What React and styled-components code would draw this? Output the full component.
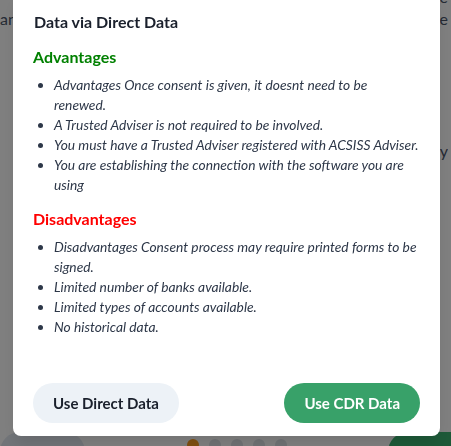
import React from 'react'
import styled, { createGlobalStyle } from 'styled-components'

const advantages = [
	'Advantages Once consent is given, it doesnt need to be renewed.',
	'A Trusted Adviser is not required to be involved.',
	'You must have a Trusted Adviser registered with ACSISS Adviser.',
	'You are establishing the connection with the software you are using',
]

const disadvantages = [
	'Disadvantages Consent process may require printed forms to be signed.',
	'Limited number of banks available.',
	'Limited types of accounts available.',
	'No historical data.',
]

function App() {
	return (
		<>
			<GlobalStyle />
			<StyledPage>
				<StyledBackground>
					<StyledBgLine $top={-14}>Please select how you would like to share your data here</StyledBgLine>
					<StyledBgLine>and the bank account details will be sent to the software we use</StyledBgLine>
					<StyledBgLine $top={110}>you can change this later from the settings page of your copy</StyledBgLine>
				</StyledBackground>
				<StyledPageFooter>
					<StyledGhostButton>Cancel</StyledGhostButton>
					<StyledDots>
						<StyledDot $active />
						<StyledDot />
						<StyledDot />
						<StyledDot />
						<StyledDot />
					</StyledDots>
					<StyledNextButton>Next</StyledNextButton>
				</StyledPageFooter>
			</StyledPage>

			<StyledOverlay>
				<StyledModal>
					<StyledTitle>Data via Direct Data</StyledTitle>
					<StyledSectionTitle color={'#008000'}>Advantages</StyledSectionTitle>
					<StyledList>
						{advantages.map((item) => (
							<li key={item}>{item}</li>
						))}
					</StyledList>
					<StyledSectionTitle color={'#ff0000'}>Disadvantages</StyledSectionTitle>
					<StyledList>
						{disadvantages.map((item) => (
							<li key={item}>{item}</li>
						))}
					</StyledList>
					<StyledModalFooter>
						<StyledButton $bg={'#edf2f7'} $fg={'#1a202c'}>
							Use Direct Data
						</StyledButton>
						<StyledButton $bg={'#38a169'} $fg={'#ffffff'}>
							Use CDR Data
						</StyledButton>
					</StyledModalFooter>
				</StyledModal>
			</StyledOverlay>
		</>
	)
}

const GlobalStyle = createGlobalStyle`
	html, body {
		margin: 0;
		padding: 0;
		overflow: hidden;
	}
	body {
		font-family: Lato, 'Liberation Sans', sans-serif;
		background: #ffffff;
		color: #1a202c;
	}
`
const StyledPage = styled.div`
	width: 451px;
	height: 472px;
	display: flex;
	flex-direction: column;
`
const StyledBackground = styled.div`
	height: 432px;
	padding-right: 3px;
	text-align: right;
	font-size: 16px;
	line-height: 22px;
	color: #4a5568;
`
const StyledBgLine = styled.p`
	margin: ${(props) => props.$top || 0}px 0 0 0;
	white-space: nowrap;
	overflow: hidden;
	direction: rtl;
`
const StyledPageFooter = styled.div`
	display: flex;
	justify-content: space-between;
	align-items: flex-start;
`
const StyledGhostButton = styled.button`
	width: 85px;
	height: 40px;
	padding: 0 0 0 21px;
	text-align: left;
	border: none;
	border-radius: 20px;
	background: #e2e8f0;
	color: #1a202c;
	font-family: Lato, sans-serif;
	font-size: 16px;
	font-weight: 700;
`
const StyledDots = styled.div`
	display: flex;
	gap: 10px;
	margin-top: 7px;
`
const StyledDot = styled.span`
	width: 12px;
	height: 12px;
	border-radius: 50%;
	background: ${(props) => (props.$active ? '#ff9d20' : '#dfe3e8')};
`
const StyledNextButton = styled.button`
	width: 90px;
	margin-right: -27px;
	height: 40px;
	padding: 0 0 0 30px;
	text-align: left;
	border: none;
	border-radius: 20px;
	background: #3cb371;
	color: #ffffff;
	font-family: Lato, sans-serif;
	font-size: 16px;
	font-weight: 700;
`
const StyledOverlay = styled.div`
	position: fixed;
	inset: 0;
	background: rgba(0, 0, 0, 0.5);
	display: flex;
	align-items: flex-end;
	padding: 0 11px 10px 13px;
`
const StyledModal = styled.div`
	width: 427px;
	flex-shrink: 0;
	box-sizing: border-box;
	padding: 20px 20px 13px 20px;
	background: #ffffff;
	border-radius: 8px;
	box-shadow: 0 10px 15px -3px rgba(0, 0, 0, 0.1);
`
const StyledTitle = styled.h2`
	margin: 0 0 11px 1px;
	font-size: 16px;
	line-height: 24px;
	font-weight: 700;
	color: #1a202c;
`
const StyledSectionTitle = styled.h3`
	margin: 0 0 6px 0;
	font-size: 16px;
	line-height: 24px;
	font-weight: 700;
	color: ${(props) => props.color};
`
const StyledList = styled.ul`
	margin: 0 0 12px 0;
	padding: 0 0.5px 0 21px;
	font-size: 13.8px;
	line-height: 20px;
	font-style: italic;
	color: #2d3748;
`
const StyledModalFooter = styled.div`
	display: flex;
	justify-content: space-between;
	margin-top: 46px;
`
const StyledButton = styled.button`
	height: 40px;
	padding: 0 20px;
	border: none;
	border-radius: 9999px;
	background: ${(props) => props.$bg};
	color: ${(props) => props.$fg};
	font-family: Lato, sans-serif;
	font-size: 15px;
	font-weight: 700;
	cursor: pointer;
`

export default App
